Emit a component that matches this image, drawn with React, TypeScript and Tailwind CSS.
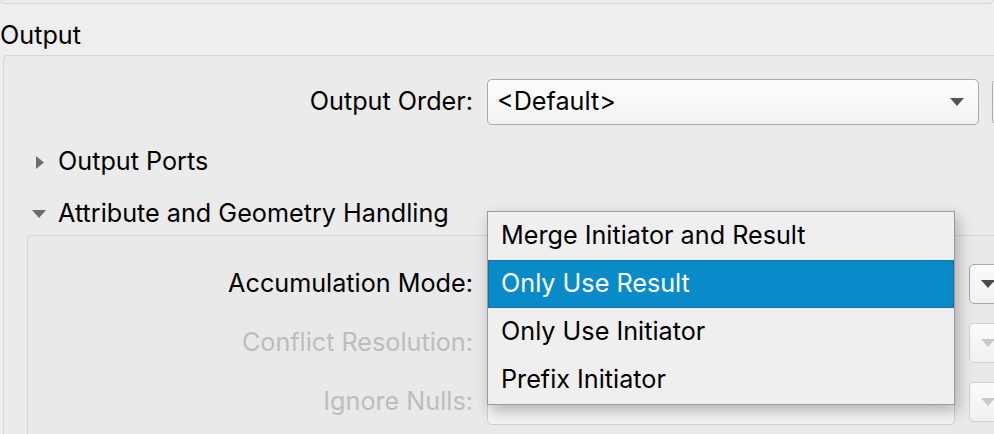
import React from 'react';

const Caret = ({ dir, className }: { dir: 'down' | 'right'; className?: string }) =>
  dir === 'down' ? (
    <svg width="14" height="8" viewBox="0 0 14 8" className={`shrink-0 ${className ?? ''}`}>
      <path d="M0 0 H14 L7 8 Z" fill="currentColor" />
    </svg>
  ) : (
    <svg width="8" height="13" viewBox="0 0 8 13" className={`shrink-0 ${className ?? ''}`}>
      <path d="M0 0 V13 L8 6.5 Z" fill="currentColor" />
    </svg>
  );

const Combo = ({ value, width, disabled }: { value?: string; width: string; disabled?: boolean }) => (
  <div
    className={`${width} h-[46px] shrink-0 flex items-center justify-between pl-[9px] pr-[14px] rounded-[5px] border bg-gradient-to-b from-[#fdfdfd] to-[#f3f3f3] ${
      disabled ? 'border-[#cfcfcf]' : 'border-[#a9a9a9]'
    }`}
  >
    <span>{value}</span>
    <Caret dir="down" className={disabled ? 'text-[#c4c4c4]' : 'text-[#545454]'} />
  </div>
);

const SideButton = ({ disabled, className }: { disabled?: boolean; className?: string }) => (
  <div
    className={`w-[44px] shrink-0 flex items-center pl-[11px] rounded-[5px] border bg-gradient-to-b from-[#fbfbfb] to-[#f1f1f1] ${
      disabled ? 'border-[#d2d2d2]' : 'border-[#a9a9a9]'
    } ${className ?? 'h-[40px]'}`}
  >
    <Caret dir="down" className={disabled ? 'text-[#c9c9c9]' : 'text-[#4a4a4a]'} />
  </div>
);

const options = ['Merge Initiator and Result', 'Only Use Result', 'Only Use Initiator', 'Prefix Initiator'];

export default function App() {
  return (
    <div
      className="relative w-[994px] h-[434px] overflow-hidden bg-[#eeeeee] text-[25.2px] text-black"
      style={{ fontFamily: 'Inter, "Noto Sans", sans-serif' }}
    >
      {/* previous section's box, only its bottom edge shows */}
      <div className="h-[4px] mx-[1px] border border-t-0 border-[#d4d4d4] rounded-b-[4px] bg-[#ededed]" />

      <div className="mt-[16px] h-[30px] leading-[30px]">Output</div>

      <div className="mt-[5px] ml-[3px] w-[1010px] h-[400px] border border-[#d6d6d6] rounded-[4px] bg-[#ebebeb]">
        <div className="mt-[23px] flex items-center h-[46px]">
          <div className="w-[469px] shrink-0 text-right">Output Order:</div>
          <div className="ml-[14px] flex items-center gap-[13px]">
            <Combo value="<Default>" width="w-[492px]" />
            <SideButton className="h-[46px]" />
          </div>
        </div>

        <div className="mt-[22px] h-[30px] flex items-center pl-[32px]">
          <Caret dir="right" className="text-[#6d6d6d]" />
          <span className="ml-[14px]">Output Ports</span>
        </div>

        <div className="mt-[22px] h-[30px] flex items-center pl-[28px]">
          <Caret dir="down" className="text-[#6d6d6d]" />
          <span className="ml-[12px]">Attribute and Geometry Handling</span>
        </div>

        <div className="mt-[6px] ml-[23px] h-[220px] border border-[#d6d6d6] rounded-[4px] bg-[#e9e9e9] pt-[25px] flex flex-col gap-[13px]">
          <div className="flex items-center h-[46px]">
            <div className="w-[445px] shrink-0 text-right">Accumulation Mode:</div>
            <div className="ml-[14px] flex items-center gap-[14px]">
              <Combo width="w-[468px]" />
              <SideButton />
            </div>
          </div>
          <div className="flex items-center h-[46px] text-[#bdbdbd]">
            <div className="w-[445px] shrink-0 text-right">Conflict Resolution:</div>
            <div className="ml-[14px] flex items-center gap-[14px]">
              <Combo width="w-[468px]" disabled />
              <SideButton disabled />
            </div>
          </div>
          <div className="flex items-center h-[46px] text-[#bdbdbd]">
            <div className="w-[445px] shrink-0 text-right">Ignore Nulls:</div>
            <div className="ml-[14px] flex items-center gap-[14px]">
              <Combo width="w-[468px]" disabled />
              <SideButton disabled />
            </div>
          </div>
        </div>
      </div>

      {/* open dropdown list */}
      <div className="absolute left-[487px] top-[211px] w-[468px] border border-[#9a9a9a] bg-[#efefef] shadow-[3px_6px_14px_rgba(0,0,0,0.28)]">
        {options.map((o, i) => (
          <div
            key={o}
            className={`h-[48px] flex items-center ${
              i === 1 ? 'bg-[#0a8bc9] text-white border border-[#1571a6] pl-[12px]' : 'text-black pl-[13px]'
            }`}
          >
            {o}
          </div>
        ))}
      </div>
    </div>
  );
}
